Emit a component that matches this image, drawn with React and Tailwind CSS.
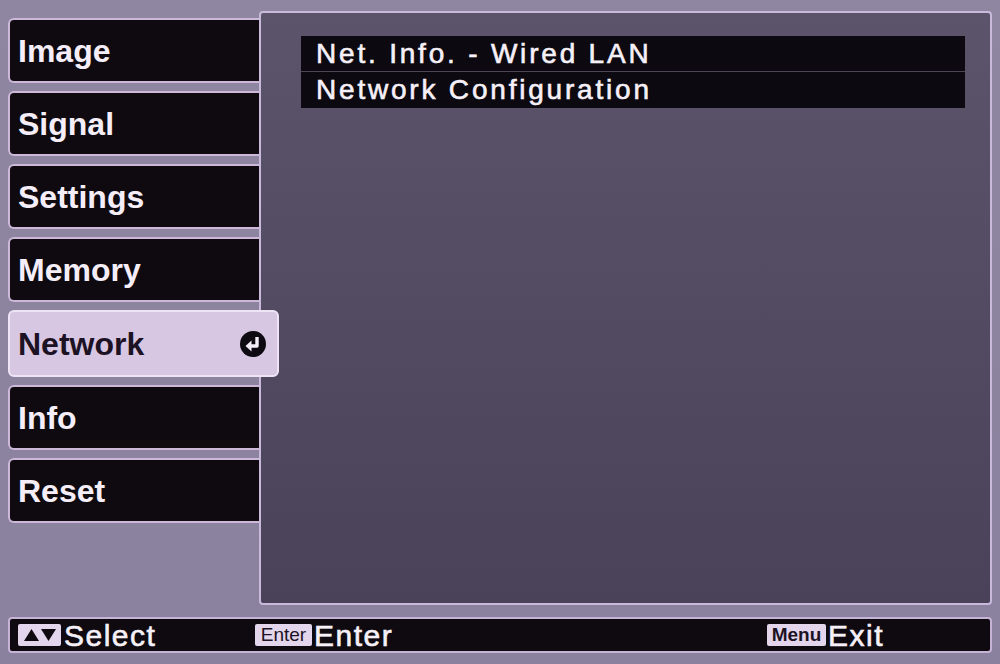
import React from "react";

const tabs = ["Image", "Signal", "Settings", "Memory", "Network", "Info", "Reset"];

function ReturnIcon() {
  return (
    <svg width="28" height="28" viewBox="0 0 28 28">
      <circle cx="14" cy="14" r="13" fill="#0e0a12" />
      <path d="M18 7 V16 H11" fill="none" stroke="#f4eef8" strokeWidth="3.4" strokeLinejoin="round" />
      <path d="M6.5 16 L12.5 10.5 L12.5 21.5 Z" fill="#f4eef8" />
    </svg>
  );
}

function Tab({ label }) {
  const active = label === "Network";
  if (active) {
    return (
      <div className="relative z-20 w-[271px] h-[67px] shrink-0 flex items-center justify-between pl-[8px] pr-[10px] rounded-[6px] border-2 border-[#efe3f6] bg-[#d7c7e3] text-[#1c1223] text-[32px] font-bold">
        <span>{label}</span>
        <ReturnIcon />
      </div>
    );
  }
  return (
    <div className="w-full h-[65px] shrink-0 flex items-center pl-[8px] rounded-l-[6px] border-2 border-r-0 border-[#cdb8da] bg-[#0e0a10] text-[#f5eef8] text-[32px] font-bold">
      {label}
    </div>
  );
}

export default function App() {
  return (
    <div
      className="w-[1000px] h-[664px] flex flex-col pt-[11px] px-[8px] bg-gradient-to-b from-[#8f87a1] to-[#8a819e] overflow-hidden"
      style={{ fontFamily: '"Liberation Sans", Arial, sans-serif' }}
    >
      <div className="flex h-[594px]">
        <div className="w-[251px] shrink-0 flex flex-col gap-[8px] pt-[7px]">
          {tabs.map((t) => (
            <Tab key={t} label={t} />
          ))}
        </div>
        <div className="relative z-10 flex-1 rounded-[4px] border-2 border-[#c9b9da] bg-gradient-to-b from-[#5c546b] to-[#4a4258] pt-[23px] pl-[40px] pr-[25px]">
          <div className="flex flex-col w-[664px]">
            <div className="h-[36px] flex items-center pl-[15px] bg-[#0c0a10] text-[#f6f0f8] text-[28px] tracking-[2.8px] [-webkit-text-stroke:0.6px_#f6f0f8] border-b border-[#4d4655]">
              Net. Info. - Wired LAN
            </div>
            <div className="h-[36px] flex items-center pl-[15px] bg-[#0c0a10] text-[#f6f0f8] text-[28px] tracking-[2.8px] [-webkit-text-stroke:0.6px_#f6f0f8]">
              Network Configuration
            </div>
          </div>
        </div>
      </div>
      <div className="mt-[12px] h-[36px] flex items-center pl-[8px] rounded-[4px] border-2 border-[#c6b3d6] bg-[#0e0a10] text-[#f6f0f8] text-[30px] tracking-[1.5px]">
        <div className="w-[237px] flex items-center gap-[3px]">
          <div className="w-[43px] h-[22px] rounded-[2px] bg-[#e3d6ec] flex items-center justify-center">
            <svg width="36" height="16" viewBox="0 0 36 16">
              <path d="M2 14 L9.5 2 L17 14 Z" fill="#0e0a10" />
              <path d="M19 2 L34 2 L26.5 14 Z" fill="#0e0a10" />
            </svg>
          </div>
          <span className="[-webkit-text-stroke:0.6px_#f6f0f8]">Select</span>
        </div>
        <div className="w-[512px] flex items-center gap-[2px]">
          <div className="w-[57px] h-[22px] rounded-[2px] bg-[#e3d6ec] flex items-center justify-center text-[#1c1223] text-[19px] tracking-normal">
            Enter
          </div>
          <span className="[-webkit-text-stroke:0.6px_#f6f0f8]">Enter</span>
        </div>
        <div className="flex items-center gap-[2px]">
          <div className="w-[59px] h-[22px] rounded-[2px] bg-[#e3d6ec] flex items-center justify-center text-[#1c1223] text-[19px] font-bold tracking-normal">
            Menu
          </div>
          <span className="[-webkit-text-stroke:0.6px_#f6f0f8]">Exit</span>
        </div>
      </div>
    </div>
  );
}
